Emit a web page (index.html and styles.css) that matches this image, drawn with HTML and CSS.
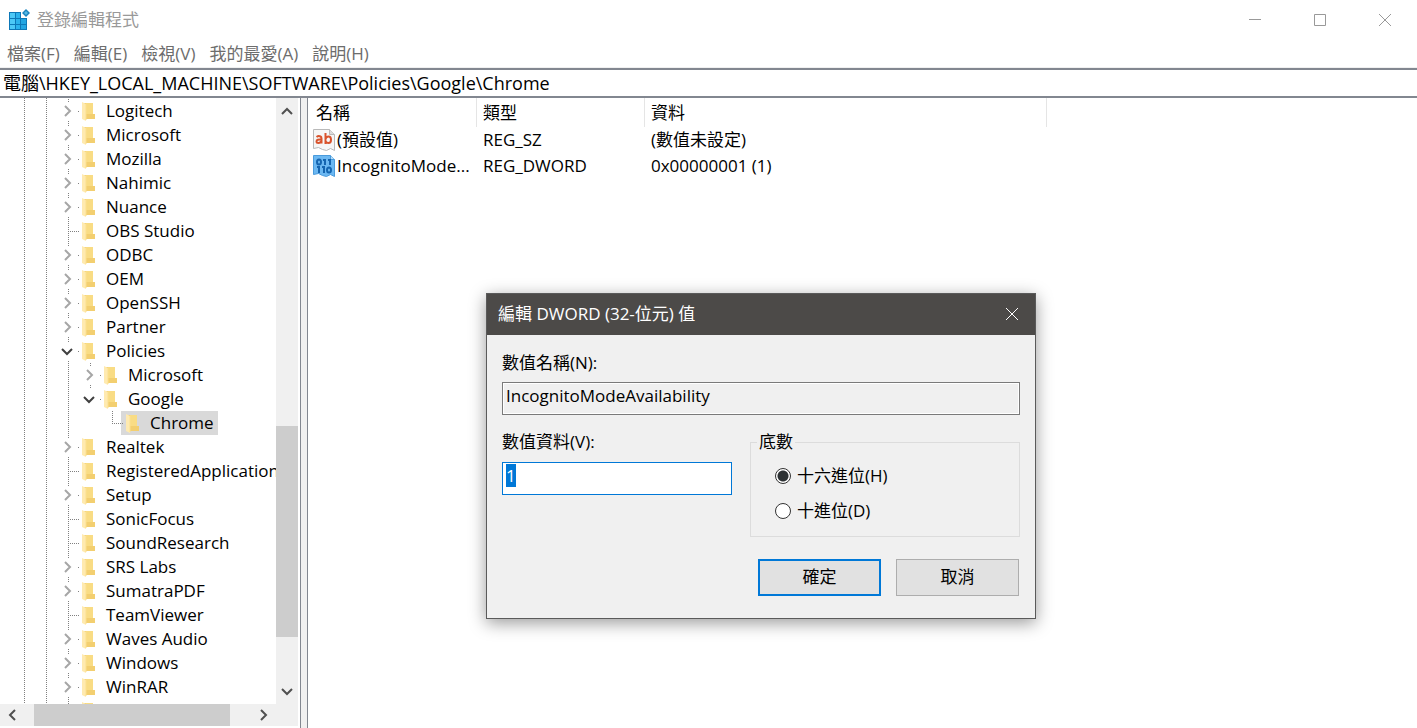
FILE: index.html
```
<!DOCTYPE html>
<html lang="zh-Hant">

<head>
    <meta charset="UTF-8">
    <meta name="viewport" content="width=device-width, initial-scale=1.0">
    <title>登錄編輯程式</title>
    <link rel="stylesheet" href="styles.css">
</head>

<body>
    <svg class="defs" aria-hidden="true">
        <symbol id="folder" viewBox="0 0 16 19">
            <path d="M2 1h10v11h2v5H2z" fill="#f3cf70" />
            <path d="M5 1h7v11H5z" fill="#f9dc84" />
            <path d="M1 0l4 2v17l-4-2z" fill="#ffeab0" />
            <path d="M5 2v16" stroke="#fbe08f" />
        </symbol>
        <symbol id="right" viewBox="0 0 12 12">
            <path d="M4 1l5 5-5 5" />
        </symbol>
        <symbol id="left" viewBox="0 0 12 12">
            <path d="M8 1L3 6l5 5" />
        </symbol>
        <symbol id="down" viewBox="0 0 12 12">
            <path d="M1 4l5 5 5-5" />
        </symbol>
        <symbol id="up" viewBox="0 0 12 12">
            <path d="M1 9l5-5 5 5" />
        </symbol>
    </svg>

    <header class="titlebar">
        <svg class="app-icon" viewBox="0 0 22 22" aria-hidden="true">
            <path d="M0 3h12v6h6v12H0z" fill="#0d78b8" />
            <path d="M1 4h5v5H1zM1 10h5v5H1zM1 16h5v4H1z" fill="#4cc8f6" />
            <path d="M7 4h4v5H7zM7 10h4v5H7zM7 16h4v4H7z" fill="#2bb2ec" />
            <path d="M12 10h5v5h-5zM12 16h5v4h-5z" fill="#22a5e2" />
            <path d="M17 0l4 4-4 4-4-4z" fill="#1b84bf" />
            <path d="M17 2l2 2-2 2-2-2z" fill="#56b9e6" />
        </svg>
        <h1>登錄編輯程式</h1>
        <div class="window-btns">
            <button aria-label="最小化"><svg viewBox="0 0 12 12"><path d="M0 5.5h12" /></svg></button>
            <button aria-label="最大化"><svg viewBox="0 0 12 12"><path d="M.5.5h11v11H.5z" /></svg></button>
            <button aria-label="關閉"><svg viewBox="0 0 12 12"><path d="M0 0l12 12M12 0L0 12" /></svg></button>
        </div>
    </header>

    <nav class="menu">
        <button>檔案(F)</button>
        <button>編輯(E)</button>
        <button>檢視(V)</button>
        <button>我的最愛(A)</button>
        <button>說明(H)</button>
    </nav>

    <input class="address" type="text" aria-label="位址" value="電腦\HKEY_LOCAL_MACHINE\SOFTWARE\Policies\Google\Chrome">

    <main class="main">
        <div class="side">
            <div class="side-top">
                <ul class="tree">
                    <li><div class="row"><button class="toggle" aria-label="展開"><svg><use href="#right" /></svg></button><svg class="folder"><use href="#folder" /></svg><span>Logitech</span></div></li>
                    <li><div class="row"><button class="toggle" aria-label="展開"><svg><use href="#right" /></svg></button><svg class="folder"><use href="#folder" /></svg><span>Microsoft</span></div></li>
                    <li><div class="row"><button class="toggle" aria-label="展開"><svg><use href="#right" /></svg></button><svg class="folder"><use href="#folder" /></svg><span>Mozilla</span></div></li>
                    <li><div class="row"><button class="toggle" aria-label="展開"><svg><use href="#right" /></svg></button><svg class="folder"><use href="#folder" /></svg><span>Nahimic</span></div></li>
                    <li><div class="row"><button class="toggle" aria-label="展開"><svg><use href="#right" /></svg></button><svg class="folder"><use href="#folder" /></svg><span>Nuance</span></div></li>
                    <li><div class="row"><i class="leaf"></i><svg class="folder"><use href="#folder" /></svg><span>OBS Studio</span></div></li>
                    <li><div class="row"><button class="toggle" aria-label="展開"><svg><use href="#right" /></svg></button><svg class="folder"><use href="#folder" /></svg><span>ODBC</span></div></li>
                    <li><div class="row"><button class="toggle" aria-label="展開"><svg><use href="#right" /></svg></button><svg class="folder"><use href="#folder" /></svg><span>OEM</span></div></li>
                    <li><div class="row"><button class="toggle" aria-label="展開"><svg><use href="#right" /></svg></button><svg class="folder"><use href="#folder" /></svg><span>OpenSSH</span></div></li>
                    <li><div class="row"><button class="toggle" aria-label="展開"><svg><use href="#right" /></svg></button><svg class="folder"><use href="#folder" /></svg><span>Partner</span></div></li>
                    <li><div class="row"><button class="toggle open" aria-label="收合"><svg><use href="#down" /></svg></button><svg class="folder"><use href="#folder" /></svg><span>Policies</span></div>
                        <ul class="line">
                            <li><div class="row"><button class="toggle" aria-label="展開"><svg><use href="#right" /></svg></button><svg class="folder"><use href="#folder" /></svg><span>Microsoft</span></div></li>
                            <li><div class="row"><button class="toggle open last" aria-label="收合"><svg><use href="#down" /></svg></button><svg class="folder"><use href="#folder" /></svg><span>Google</span></div>
                                <ul>
                                    <li><div class="row selected"><i class="leaf last"></i><svg class="folder"><use href="#folder" /></svg><span>Chrome</span></div></li>
                                </ul>
                            </li>
                        </ul>
                    </li>
                    <li><div class="row"><button class="toggle" aria-label="展開"><svg><use href="#right" /></svg></button><svg class="folder"><use href="#folder" /></svg><span>Realtek</span></div></li>
                    <li><div class="row"><i class="leaf"></i><svg class="folder"><use href="#folder" /></svg><span>RegisteredApplications</span></div></li>
                    <li><div class="row"><button class="toggle" aria-label="展開"><svg><use href="#right" /></svg></button><svg class="folder"><use href="#folder" /></svg><span>Setup</span></div></li>
                    <li><div class="row"><i class="leaf"></i><svg class="folder"><use href="#folder" /></svg><span>SonicFocus</span></div></li>
                    <li><div class="row"><i class="leaf"></i><svg class="folder"><use href="#folder" /></svg><span>SoundResearch</span></div></li>
                    <li><div class="row"><button class="toggle" aria-label="展開"><svg><use href="#right" /></svg></button><svg class="folder"><use href="#folder" /></svg><span>SRS Labs</span></div></li>
                    <li><div class="row"><button class="toggle" aria-label="展開"><svg><use href="#right" /></svg></button><svg class="folder"><use href="#folder" /></svg><span>SumatraPDF</span></div></li>
                    <li><div class="row"><i class="leaf"></i><svg class="folder"><use href="#folder" /></svg><span>TeamViewer</span></div></li>
                    <li><div class="row"><button class="toggle" aria-label="展開"><svg><use href="#right" /></svg></button><svg class="folder"><use href="#folder" /></svg><span>Waves Audio</span></div></li>
                    <li><div class="row"><button class="toggle" aria-label="展開"><svg><use href="#right" /></svg></button><svg class="folder"><use href="#folder" /></svg><span>Windows</span></div></li>
                    <li><div class="row"><button class="toggle" aria-label="展開"><svg><use href="#right" /></svg></button><svg class="folder"><use href="#folder" /></svg><span>WinRAR</span></div></li>
                    <li><div class="row"><i class="leaf"></i><svg class="folder"><use href="#folder" /></svg></div></li>
                </ul>
                <div class="vscroll">
                    <button aria-label="向上"><svg><use href="#up" /></svg></button>
                    <div class="track">
                        <div class="thumb"></div>
                    </div>
                    <button aria-label="向下"><svg><use href="#down" /></svg></button>
                </div>
            </div>
            <div class="hscroll">
                <button aria-label="向左"><svg><use href="#left" /></svg></button>
                <div class="track">
                    <div class="thumb"></div>
                </div>
                <button aria-label="向右"><svg><use href="#right" /></svg></button>
            </div>
        </div>
        <div class="splitter"></div>
        <section class="values">
            <table>
                <thead>
                    <tr>
                        <th class="name">名稱</th>
                        <th class="type">類型</th>
                        <th class="data">資料</th>
                    </tr>
                </thead>
                <tbody>
                    <tr>
                        <td>
                            <div class="value-name">
                                <svg class="value-icon" viewBox="0 0 22 22" aria-hidden="true">
                                    <path d="M.5.5h16l5 5v16l-4-2-4 2-4-1-4-2-5 1z" fill="#f6f6f6" stroke="#b9b9b9" />
                                    <path d="M16.5.5v5h5" fill="#ddd" stroke="#b9b9b9" />
                                    <path d="M3.5 8q2-1.500 4-.5 1 .5 1 2v5M8.500 10.500q-5-.5-5 2 0 1.500 2 1.500t3-2M12.500 4v11M12.500 10q1-2.500 3-2.500 2.500 0 2.500 3.300t-2.500 3.300q-2 0-3-1.800" fill="none" stroke="#d9532c" stroke-width="2" />
                                </svg>
                                <span>(預設值)</span>
                            </div>
                        </td>
                        <td>REG_SZ</td>
                        <td>(數值未設定)</td>
                    </tr>
                    <tr>
                        <td>
                            <div class="value-name">
                                <svg class="value-icon" viewBox="0 0 22 22" aria-hidden="true">
                                    <path d="M.5.5h17l4 4v17l-4-2-4 2-4-1-4-2-5 1z" fill="#6cb8f2" stroke="#4a9bdc" />
                                    <path d="M17.5.5v4h4" fill="#b9dff8" stroke="#4a9bdc" />
                                    <ellipse cx="6" cy="7" rx="2" ry="2.500" stroke="#1565b0" stroke-width="2" />
                                    <ellipse cx="16" cy="15" rx="2" ry="2.500" stroke="#1565b0" stroke-width="2" />
                                    <path d="M10 5h2v5M15 5h2v5M4 12h2v6M9 12h2v6" stroke="#1565b0" stroke-width="2" />
                                </svg>
                                <span>IncognitoMode...</span>
                            </div>
                        </td>
                        <td>REG_DWORD</td>
                        <td>0x00000001 (1)</td>
                    </tr>
                </tbody>
            </table>
        </section>
    </main>

    <form class="dialog" role="dialog" aria-labelledby="dialog-title">
        <div class="dialog-title">
            <h2 id="dialog-title">編輯 DWORD (32-位元) 值</h2>
            <button type="button" aria-label="關閉"><svg viewBox="0 0 12 12"><path d="M0 0l12 12M12 0L0 12" /></svg></button>
        </div>
        <div class="dialog-body">
            <label for="value-name">數值名稱(N):</label>
            <input class="field" id="value-name" type="text" value="IncognitoModeAvailability" readonly>
            <div class="columns">
                <div>
                    <label for="value-data">數值資料(V):</label>
                    <input class="field editable" id="value-data" type="text" value="1">
                </div>
                <fieldset>
                    <legend>底數</legend>
                    <label class="radio"><input type="radio" name="base" checked>十六進位(H)</label>
                    <label class="radio"><input type="radio" name="base">十進位(D)</label>
                </fieldset>
            </div>
            <div class="actions">
                <button class="ok" type="button">確定</button>
                <button type="button">取消</button>
            </div>
        </div>
    </form>
    <script src="script.js"></script>
</body>

</html>
```
FILE: styles.css
```
* {
    margin: 0;
    padding: 0;
    box-sizing: border-box;
}

body {
    height: 100vh;
    display: flex;
    flex-direction: column;
    overflow: hidden;
    background-color: #fff;
    color: #000;
    font: 17px/24px "Open Sans", "Noto Sans CJK TC", sans-serif;
}

button,
input {
    font: inherit;
    color: inherit;
    border: none;
    background: none;
}

svg {
    display: block;
    fill: none;
    stroke-width: 1;
}

ul {
    list-style: none;
}

.defs {
    position: absolute;
    width: 0;
    height: 0;
}

/* title bar */
.titlebar {
    height: 40px;
    flex: none;
    display: flex;
    align-items: center;
    padding-left: 9px;
    color: #999;
}

.titlebar h1 {
    flex: 1;
    margin-left: 6px;
    font-size: 17px;
    font-weight: normal;
}

.app-icon {
    width: 22px;
    height: 22px;
}

.window-btns {
    display: flex;
}

.window-btns button {
    width: 65px;
    height: 40px;
    display: grid;
    place-items: center;
}

.window-btns svg,
.dialog-title svg {
    width: 12px;
    height: 12px;
    stroke: currentColor;
}

/* menu and address */
.menu {
    height: 28px;
    flex: none;
    display: flex;
    align-items: center;
    gap: 14px;
    padding-left: 7px;
    color: #6d6d6d;
    border-bottom: 1px solid #f0f0f0;
}

.address {
    height: 30px;
    flex: none;
    width: 100%;
    padding: 0 3px 3px;
    font-size: 18px;
    border-top: 2px solid #828790;
    border-bottom: 2px solid #828790;
}

/* tree */
.main {
    flex: 1;
    min-height: 0;
    display: flex;
}

.side {
    width: 300px;
    flex: none;
    display: flex;
    flex-direction: column;
    padding: 0 2px 2px 0;
}

.side-top {
    flex: 1;
    min-height: 0;
    display: flex;
}

.tree {
    flex: 1;
    min-width: 0;
    overflow: hidden;
    padding: 1px 0 0 57px;
    background: linear-gradient(#808080 50%, transparent 50%) 24px 0 / 1px 2px repeat-y,
        linear-gradient(#808080 50%, transparent 50%) 46px 0 / 1px 2px repeat-y;
}

.tree ul {
    padding-left: 22px;
}

.tree ul.line {
    background: linear-gradient(#808080 50%, transparent 50%) 11px 0 / 1px 2px repeat-y;
}

.row {
    height: 24px;
    display: flex;
    align-items: center;
    white-space: nowrap;
}

.toggle,
.leaf {
    width: 22px;
    height: 24px;
    flex: none;
    background: linear-gradient(#808080 50%, transparent 50%) 11px 0 / 1px 2px repeat-y;
}

/* the branch line is hidden behind the arrow */
.toggle {
    padding: 3px 6px 3px 4px;
    background: linear-gradient(#808080 50%, transparent 50%) 11px 0 / 1px 2px repeat-y,
        linear-gradient(#808080, #808080) 21px 12px / 1px 1px no-repeat;
}

.toggle svg {
    width: 12px;
    height: 18px;
    background-color: #fff;
    stroke: #a6a6a6;
    stroke-width: 2;
}

.toggle.open svg {
    stroke: #404040;
}

.toggle.last {
    background-repeat: no-repeat;
}

.leaf {
    background: linear-gradient(#808080 50%, transparent 50%) 11px 0 / 1px 2px repeat-y,
        linear-gradient(90deg, #808080 50%, transparent 50%) 11px 12px / 2px 1px repeat-x;
    clip-path: inset(0 0 0 11px);
}

.leaf.last {
    clip-path: polygon(11px 0, 100% 0, 100% 13px, 11px 13px);
}

.folder {
    width: 16px;
    height: 19px;
    flex: none;
    margin: 0 9px 0 2px;
}

.selected {
    width: 117px;
    background: linear-gradient(#d9d9d9, #d9d9d9) 20px 0 no-repeat;
}

/* scroll bars */
.vscroll,
.hscroll {
    flex: none;
    display: flex;
    background-color: #f0f0f0;
}

.vscroll {
    width: 22px;
    flex-direction: column;
}

.vscroll button {
    width: 22px;
    height: 26px;
    padding: 7px 5px;
}

.hscroll {
    height: 22px;
    padding-right: 22px;
}

.hscroll button {
    width: 26px;
    height: 22px;
    padding: 5px 7px;
}

.vscroll svg,
.hscroll svg {
    width: 12px;
    height: 12px;
    stroke: #505050;
    stroke-width: 2;
}

.track {
    flex: 1;
    display: flex;
}

.vscroll .track {
    flex-direction: column;
    padding-top: 302px;
}

.hscroll .track {
    padding-left: 8px;
}

.thumb {
    background-color: #cdcdcd;
}

.vscroll .thumb {
    height: 211px;
}

.hscroll .thumb {
    width: 196px;
}

.splitter {
    width: 8px;
    flex: none;
    background-color: #f0f0f0;
    border: 1px solid #828790;
    border-width: 0 1px;
}

/* value list */
.values {
    flex: 1;
    min-width: 0;
    overflow: hidden;
}

table {
    width: 739px;
    table-layout: fixed;
    border-collapse: separate;
    border-spacing: 0;
}

th {
    height: 29px;
    padding-left: 6px;
    font-weight: normal;
    text-align: left;
    border-right: 1px solid #e5e5e5;
}

th.name {
    width: 169px;
    padding-left: 8px;
}

th.type {
    width: 168px;
}

td {
    height: 26px;
    padding-left: 6px;
}

td:first-child {
    padding: 0 3px 0 5px;
}

.value-name {
    display: flex;
    align-items: center;
    gap: 2px;
    white-space: nowrap;
}

.value-icon {
    width: 22px;
    height: 22px;
    flex: none;
}

/* edit dialog */
.dialog {
    position: absolute;
    left: 486px;
    top: 293px;
    width: 550px;
    background-color: #f0f0f0;
    border: 1px solid #5a5a5a;
    box-shadow: 0 4px 16px rgba(0, 0, 0, 0.4);
}

.dialog-title {
    height: 41px;
    display: flex;
    align-items: center;
    justify-content: space-between;
    padding: 0 0 2px 11px;
    color: #fff;
    background-color: #4c4a48;
}

.dialog-title h2 {
    font-size: 17px;
    font-weight: normal;
}

.dialog-title button {
    width: 46px;
    height: 38px;
    display: grid;
    place-items: center;
}

.dialog-body {
    padding: 16px 15px 22px;
}

.dialog-body label {
    display: block;
}

.field {
    display: block;
    width: 100%;
    height: 33px;
    margin-top: 7px;
    padding: 0 3px 6px;
    border: 1px solid #7a7a7a;
    outline: none;
}

.field:read-only {
    box-shadow: inset 0 0 0 1px #fff;
}

.field.editable {
    margin-top: 8px;
    background-color: #fff;
    border-color: #0078d7;
}

.field::selection {
    color: #fff;
    background-color: #0078d7;
}

.columns {
    display: grid;
    grid-template-columns: 230px 1fr;
    gap: 18px;
    margin-top: 15px;
}

fieldset {
    height: 107px;
    padding: 5px 24px 0;
    border: 1px solid #dcdcdc;
}

legend {
    margin-left: -18px;
    padding: 0 2px;
}

.dialog-body .radio {
    display: flex;
    align-items: center;
    gap: 6px;
    margin-top: 5px;
    margin-bottom: 11px;
}

input[type="radio"] {
    appearance: none;
    width: 16px;
    height: 16px;
    border: 1px solid #333;
    border-radius: 50%;
    background-color: #fff;
}

input[type="radio"]:checked {
    background: radial-gradient(circle, #2d3234 5px, #fff 6px);
}

.actions {
    display: flex;
    justify-content: flex-end;
    gap: 15px;
    margin-top: 22px;
    padding-right: 1px;
}

.actions button {
    width: 123px;
    height: 37px;
    padding-bottom: 2px;
    background-color: #e1e1e1;
    border: 1px solid #adadad;
}

.actions .ok {
    border: 2px solid #0078d7;
}
```
FILE: script.js
```
document.querySelector('#value-data').select()
```
